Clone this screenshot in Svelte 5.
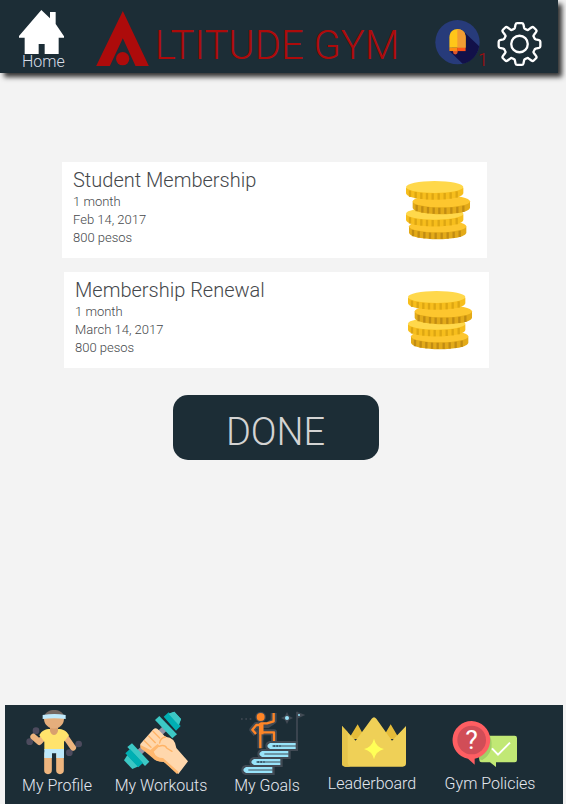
<script>
  const memberships = [
    { title: 'Student Membership', length: '1 month', date: 'Feb 14, 2017', price: '800 pesos' },
    { title: 'Membership Renewal', length: '1 month', date: 'March 14, 2017', price: '800 pesos' }
  ];
  const coins = [
    { x: 87, y: 201, top: '#fdc62e', side: '#e3aa18', rib: '#c18c13' },
    { x: 78, y: 163, top: '#ffd84b', side: '#f7be1c', rib: '#dda613' },
    { x: 98, y: 126, top: '#fdc62e', side: '#e3aa18', rib: '#c18c13' },
    { x: 78, y: 83, top: '#ffd84b', side: '#f7be1c', rib: '#dda613' }
  ];
  const ribs = [12, 29, 46, 63, 80, 98, 116, 134, 152];
  const ribDrop = (x) => 17 * Math.sqrt(1 - ((x - 86) / 86) ** 2);
  const steps = [
    { x: 70, y: 216, w: 88 },
    { x: 94, y: 192, w: 88 },
    { x: 118, y: 168, w: 88 },
    { x: 142, y: 144, w: 86 }
  ];
</script>

<div class="page">
  <header>
    <a class="home" href="#home">
      <svg viewBox="57 30 135 132" width="45" height="44" aria-hidden="true">
        <path fill="#fff" d="M124 30 150 55V36h17v36l25 37v4h-16v49h-42v-30h-18v30H74v-49H57v-5Z" />
      </svg>
      <span>Home</span>
    </a>
    <div class="brand">
      <svg viewBox="288 33 158 165" width="53" height="55" aria-hidden="true">
        <path fill="#ad0b0b" d="M368 33 446 198h-40l-38-83-39 83h-41Z" />
        <circle cx="367.500" cy="176" r="20" fill="#ad0b0b" />
      </svg>
      <h1>LTITUDE GYM</h1>
    </div>
    <button class="bell" aria-label="Notifications">
      <svg viewBox="105 59 135 133" width="45" height="44" aria-hidden="true">
        <circle cx="172.500" cy="126" r="67" fill="#273b7a" />
        <path fill="#121149" d="m191 94 47 44c-5 29-25 48-50 53l-40-38Z" />
        <path fill="#e0552b" d="M159 152h14v4a7 7 0 0 1-14 0Z" />
        <path fill="#ffc619" d="M148 143v-31c0-34 49-34 49 0v31Z" />
        <path fill="#f29c33" d="M172 87c15 0 25 9 25 25v31h-25Z" />
        <path fill="#ff8b12" d="M148 143h25v10h-25Z" />
        <path fill="#ff5419" d="M172 143h25v10h-25Z" />
      </svg>
      <span class="count">1</span>
    </button>
    <button class="gear" aria-label="Settings">
      <svg viewBox="291 65 135 133" width="45" height="44" aria-hidden="true">
        <g transform="translate(358.500 131.500)" fill="none" stroke="#fff" stroke-width="7" stroke-linejoin="round">
          <path d="M-7-63H7q4 0 5 4l2 10q1 3 4 4l4 2q3 2 6-1l8-6q4-3 7 0l7 7q3 3 0 7l-6 8q-3 3-1 6l2 4q1 3 4 4l10 2q4 1 4 5V7q0 4-4 5l-10 2q-3 1-4 4l-2 4q-2 3 1 6l6 8q3 4 0 7l-7 7q-3 3-7 0l-8-6q-3-3-6-1l-4 2q-3 1-4 4l-2 10q-1 4-5 4H-7q-4 0-5-4l-2-10q-1-3-4-4l-4-2q-3-2-6 1l-8 6q-4 3-7 0l-7-7q-3-3 0-7l6-8q3-3 1-6l-2-4q-1-3-4-4l-10-2q-4-1-4-5V-7q0-4 4-5l10-2q3-1 4-4l2-4q2-3-1-6l-6-8q-3-4 0-7l7-7q3-3 7 0l8 6q3 3 6 1l4-2q3-1 4-4l2-10q1-4 5-4Z" />
          <circle r="25" />
        </g>
      </svg>
    </button>
  </header>

  <main>
    <ul class="list">
      {#each memberships as m}
        <li class="card">
          <div>
            <h2>{m.title}</h2>
            <p>{m.length}</p>
            <p>{m.date}</p>
            <p>{m.price}</p>
          </div>
          <svg viewBox="78 63 192 174" width="64" height="58" aria-hidden="true">
            {#each coins as c}
              <g transform="translate({c.x} {c.y})">
                <path fill={c.side} d="M0 0v17c5 26 167 26 172 0V0Z" />
                {#each ribs as r}
                  <path stroke={c.rib} stroke-width="7" d="M{r} {ribDrop(r)}v19" />
                {/each}
                <ellipse cx="86" cy="-2" rx="86" ry="18" fill={c.top} />
              </g>
            {/each}
          </svg>
        </li>
      {/each}
    </ul>
    <button class="done">DONE</button>
  </main>

  <nav>
    <a class="wide-104" href="#profile">
      <svg viewBox="72 45 198 195" width="66" height="65" aria-hidden="true">
        <path stroke="#55566a" stroke-width="6" d="m89 140 19-33M208 173l28-26" />
        <g fill="#4d4b5e">
          <circle cx="89" cy="140" r="10" /><circle cx="108" cy="107" r="10" />
          <circle cx="208" cy="173" r="10" /><circle cx="236" cy="147" r="10" />
        </g>
        <path fill="none" stroke="#eeb57e" stroke-width="18" stroke-linecap="round" stroke-linejoin="round" d="m137 120-19 21-18-16M190 116l29 42" />
        <path fill="none" stroke="#eeb57e" stroke-width="23" stroke-linecap="round" d="M144 178v48M180 178v48" />
        <path fill="#ffe36c" d="M118 121c7-14 18-19 32-19h24c14 0 25 5 33 19l-15 19v24h-59v-24Z" />
        <path fill="#bde8fa" d="M133 162h59v27h-23v-14h-13v14h-23Z" />
        <path fill="#d9a06e" d="M150 92h24v16c-4 16-20 16-24 0Z" />
        <path fill="#e5ae7c" d="M132 62h60v10c-2 38-58 38-60 0Z" />
        <path fill="#756963" d="M133 62c8-23 51-23 59 0Z" />
        <path fill="#bfe9fb" d="M128 60q35-6 69 0v12q-34-5-69 0Z" />
      </svg>
      <span>My Profile</span>
    </a>
    <a class="wide-104" href="#workouts">
      <svg viewBox="54 45 198 195" width="66" height="65" aria-hidden="true">
        <path stroke="#9293a5" stroke-width="18" d="m86 174 82-77" />
        <g fill="#3cc8c5">
          <path d="m135 75 13-12 53 55-14 12Z" />
          <path d="m174 56 19-6 20 22-7 20Z" />
          <path d="m52 156 14-11 52 55-13 13Z" />
          <path d="m42 196 10-16 34 34-19 8Z" />
        </g>
        <path fill="#00afb3" d="m161 65 15-13 36 41-14 14ZM46 175l14-13 39 42-14 13Z" />
        <path fill="#3cc8c5" d="m176 57 17-7 20 22-7 18Z" />
        <path fill="#ffd7ac" d="m91 147 39-44q8-7 16 2l20 20q30 2 33 34l35 40-29 38-44-37q-24 1-34-16l-24-21q-14-3-12-16Z" />
        <path fill="#ffb86f" d="M92 150q-4 11 10 17l26 22q9 12 33 11l40 37 5-6-47-42q-21 0-28-19l18-17-6-6-22 18Z" />
        <path fill="none" stroke="#ffb366" stroke-width="4" stroke-linecap="round" d="m103 137 20 20M116 123l20 20M129 109l20 20M147 154q17-7 24 6l15 9M167 126q-16 2-18 18" />
      </svg>
      <span>My Workouts</span>
    </a>
    <a class="wide-108" href="#goals">
      <svg viewBox="42 45 198 195" width="66" height="65" aria-hidden="true">
        <g fill="none" stroke="#414a54" stroke-width="18" stroke-linejoin="round">
          <path d="M121 160v-70h-12l-12 14 11 13M121 90h22l18-12V54M121 112h41v26" />
          <circle cx="122" cy="66" r="7" />
        </g>
        {#each steps as s}
          <path fill="#414a54" d="M{s.x + 6} {s.y - 6}h{s.w}v30h-{s.w}q-12-3-12-15t12-15Z" />
          <path fill="#98e4fa" d="M{s.x + 8} {s.y}h{s.w - 9}v18h-{s.w - 9}q-16-9 0-18Z" />
          <path stroke="#414a54" stroke-width="3" d="M{s.x + 15} {s.y + 9}h{s.w - 15}" />
        {/each}
        <path stroke="#27465a" stroke-width="5" stroke-dasharray="5 4" d="M160 153h22M112 201h22" />
        <path fill="none" stroke="#414a54" stroke-width="5" d="M231 144V50" />
        <path fill="#414a54" d="m231 50 25 10-25 11Z" />
        <circle cx="237" cy="60" r="3" fill="#98e4fa" />
        <path fill="#414a54" d="m201 51 6 12 12 6-12 6-6 12-6-12-12-6 12-6Z" />
        <circle cx="201" cy="69" r="6" fill="#98e4fa" />
        <path stroke="#414a54" stroke-width="4" stroke-dasharray="5 8" d="M63 72h32" />
        <circle cx="122" cy="66" r="12" fill="#ff8526" />
        <path fill="none" stroke="#ff8526" stroke-width="7" stroke-linejoin="round" d="M121 160v-70h-12l-12 14 11 13M121 85h20l20-6V54M121 112h41v26" />
        <path stroke="#ff8526" stroke-width="13" d="M124 84v34" />
      </svg>
      <span>My Goals</span>
    </a>
    <a class="wide-102" href="#leaderboard">
      <svg viewBox="57 45 198 189" width="66" height="63" aria-hidden="true">
        <path fill="#e5bc39" d="m86 132 27-44 24 44ZM186 132l26-44 26 44Z" />
        <path fill="#efd057" d="m66 93 41 44 48-66q7-9 14 0l47 66 42-44v112q0 10-10 10H76q-10 0-10-10Z" />
        <path fill="#e6c54b" d="m66 93 17 18v91q0 9 7 13H76q-10 0-10-10Z" />
        <path fill="#ffff57" d="M162 131q6 25 30 31-24 6-30 31-6-25-30-31 24-6 30-31Z" />
      </svg>
      <span>Leaderboard</span>
    </a>
    <a class="wide-134" href="#policies">
      <svg viewBox="81 45 198 189" width="66" height="63" aria-hidden="true">
        <path fill="#c1e875" d="M155 122h99q7 0 7 7v66q0 7-7 7h-56v14l-18-14h-25q-7 0-7-7v-66q0-7 7-7Z" />
        <path fill="#a2cf67" d="M180 122q17 47-24 74l-8-4v-63q0-7 7-7Z" />
        <path fill="none" stroke="#fff" stroke-width="6" d="m186 160 18 19 36-36" />
        <path fill="#ff5e62" d="M125 78a57 57 0 0 1 9 113v18l-20-18A57 57 0 0 1 125 78Z" />
        <circle cx="125" cy="135" r="43" fill="#d14d57" />
        <text x="125" y="163" text-anchor="middle" fill="#fff" font-size="80" font-weight="400" font-family="Roboto, sans-serif">?</text>
      </svg>
      <span>Gym Policies</span>
    </a>
  </nav>
</div>

<style>
  :global(body) {
    margin: 0;
    background: #f3f3f3;
  }
  .page {
    display: flex;
    flex-direction: column;
    min-height: 100vh;
    overflow-x: hidden;
    font-family: Roboto, 'Open Sans', sans-serif;
    font-weight: 300;
  }
  svg {
    display: block;
    flex: none;
    overflow: visible;
  }
  button {
    padding: 0;
    border: 0;
    background: none;
    font: inherit;
    cursor: pointer;
  }
  a {
    text-decoration: none;
  }
  header {
    display: flex;
    align-items: flex-start;
    box-sizing: border-box;
    height: 73px;
    margin-right: 8px;
    padding: 10px 16px 0 19px;
    background: #1c2d36;
    box-shadow: 4px 4px 5px #333;
  }
  .home {
    display: flex;
    flex-direction: column;
    align-items: center;
    color: #d8dde8;
    font-size: 16px;
    line-height: 16px;
  }
  .home span {
    padding-left: 3px;
  }
  .brand {
    display: flex;
    flex: 1;
    gap: 6px;
    margin-left: 31px;
  }
  h1 {
    margin: 0;
    color: #ad0b0b;
    font-size: 40px;
    font-weight: 300;
    line-height: 72px;
    white-space: nowrap;
  }
  .brand svg {
    margin-top: 1px;
  }
  .bell {
    position: relative;
    margin: 10px 17px 0 0;
  }
  .count {
    position: absolute;
    right: -8px;
    bottom: -6px;
    color: #ad0b0b;
    font-size: 18px;
    line-height: 20px;
  }
  .gear {
    margin-top: 12px;
  }
  main {
    display: flex;
    flex: 1;
    flex-direction: column;
    align-items: center;
    padding: 89px 77px 40px 62px;
  }
  .list {
    display: flex;
    flex-direction: column;
    gap: 14px;
    width: 100%;
    margin: 0 0 27px;
    padding: 0;
    list-style: none;
  }
  .card {
    display: flex;
    align-items: center;
    justify-content: space-between;
    box-sizing: border-box;
    width: calc(100% - 2px);
    height: 96px;
    padding: 0 17px 0 11px;
    background: #fff;
    color: #45484b;
  }
  .card:nth-child(even) {
    align-self: flex-end;
  }
  .card div {
    padding-bottom: 6px;
  }
  h2 {
    margin: 0;
    font-size: 20px;
    font-weight: 300;
    line-height: 26px;
  }
  p {
    margin: 0;
    font-size: 13px;
    line-height: 18px;
  }
  .done {
    width: 206px;
    height: 65px;
    padding-top: 8px;
    border-radius: 15px;
    background: #1c2d36;
    color: #d3d3d3;
    font-size: 38px;
  }
  nav {
    display: flex;
    box-sizing: border-box;
    height: 99px;
    margin: 0 3px 0 5px;
    padding: 5px 6px 0 0;
    background: #1c2d36;
  }
  nav a {
    display: flex;
    flex-direction: column;
    align-items: center;
    min-width: 0;
    color: #e4e8f0;
    font-size: 16px;
    line-height: 22px;
    white-space: nowrap;
  }
  .wide-102 {
    flex: 102 0 0;
  }
  .wide-104 {
    flex: 104 0 0;
  }
  .wide-108 {
    flex: 108 0 0;
  }
  .wide-134 {
    flex: 134 0 0;
  }
</style>
